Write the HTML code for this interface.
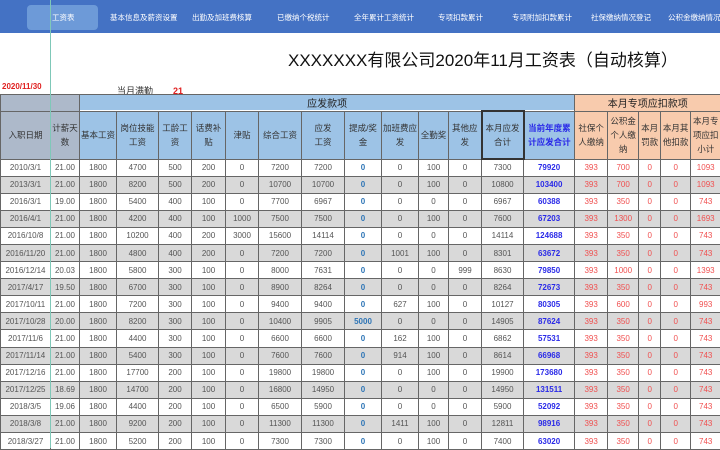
<!DOCTYPE html>
<html><head><meta charset="utf-8"><style>
*{margin:0;padding:0;box-sizing:border-box}
body{width:720px;height:448px;overflow:hidden;background:#fff;font-family:"Liberation Sans","Noto Sans CJK SC",sans-serif;position:relative}
.nav{position:absolute;left:0;top:0;width:720px;height:33px;background:#4472c4}
.nav span{position:absolute;top:12px;font-size:7.5px;color:#fff;white-space:nowrap}
.act{position:absolute;left:27px;top:5px;width:71px;height:25px;background:#6d9ad8;border-radius:4px}
.title{position:absolute;left:288px;top:46px;font-size:17px;color:#111;white-space:nowrap}
.date{position:absolute;left:2px;top:82px;font-size:8px;color:#e02020;font-weight:bold}
.mq{position:absolute;left:117px;top:84px;font-size:9px;color:#333}
.mq b{color:#e02020;margin-left:20px}
table{position:absolute;left:0;top:94px;border-collapse:collapse;table-layout:fixed;width:720px}
td{border:1px solid #666;font-size:8px;text-align:center;color:#555;height:17.1px;overflow:hidden;white-space:nowrap;padding:0}
tr.h1 td{height:14px;font-size:10px;color:#222}
tr.h2 td{height:48px;font-size:8.5px;color:#333;white-space:normal;line-height:14px}
.g{background:#adb9ca}.b{background:#9dc3e6}.o{background:#f8cbad}
tr.z td{background:#d9d9d9}
td.c{color:#2e75b6;font-weight:bold}
td.y{color:#2a2ae8;font-weight:bold}
td.r{color:#f05050}
.vl{position:absolute;left:50px;top:0;width:1px;height:448px;background:#7fc8b8}
</style></head><body>
<div class="nav"><div class="act"></div>
<span style="left:52px">工资表</span><span style="left:110px">基本信息及薪资设置</span><span style="left:192px">出勤及加班费核算</span><span style="left:277px">已缴纳个税统计</span><span style="left:354px">全年累计工资统计</span><span style="left:438px">专项扣款累计</span><span style="left:512px">专项附加扣款累计</span><span style="left:591px">社保缴纳情况登记</span><span style="left:668px">公积金缴纳情况登记</span></div>
<div class="title">XXXXXXX有限公司2020年11月工资表（自动核算）</div>
<div class="date">2020/11/30</div>
<div class="mq">当月满勤<b>21</b></div>
<table>
<colgroup><col style="width:50px"><col style="width:29px"><col style="width:37px"><col style="width:42px"><col style="width:33px"><col style="width:34px"><col style="width:33px"><col style="width:43px"><col style="width:43px"><col style="width:37px"><col style="width:37px"><col style="width:30px"><col style="width:33px"><col style="width:42px"><col style="width:51px"><col style="width:33px"><col style="width:31px"><col style="width:22px"><col style="width:30px"><col style="width:30px"></colgroup>
<tr class="h1"><td class="g" colspan="2"></td><td class="b" colspan="13">应发款项</td><td class="o" colspan="5">本月专项应扣款项</td></tr>
<tr class="h2"><td class="g">入职日期</td><td class="g">计薪天数</td><td class="b">基本工资</td><td class="b">岗位技能工资</td><td class="b">工龄工资</td><td class="b">话费补贴</td><td class="b">津贴</td><td class="b">综合工资</td><td class="b">应发<br>工资</td><td class="b">提成/奖金</td><td class="b">加班费应发</td><td class="b">全勤奖</td><td class="b">其他应发</td><td class="b" style="border:2px solid #333">本月应发合计</td><td class="b" style="color:#2a2ae8;font-weight:bold">当前年度累计应发合计</td><td class="o">社保个人缴纳</td><td class="o">公积金个人缴纳</td><td class="o">本月罚款</td><td class="o">本月其他扣款</td><td class="o">本月专项应扣小计</td></tr>
<tr><td>2010/3/1</td><td>21.00</td><td>1800</td><td>4700</td><td>500</td><td>200</td><td>0</td><td>7200</td><td>7200</td><td class="c">0</td><td>0</td><td>100</td><td>0</td><td>7300</td><td class="y">79920</td><td class="r">393</td><td class="r">700</td><td class="r">0</td><td class="r">0</td><td class="r">1093</td></tr>
<tr class="z"><td>2013/3/1</td><td>21.00</td><td>1800</td><td>8200</td><td>500</td><td>200</td><td>0</td><td>10700</td><td>10700</td><td class="c">0</td><td>0</td><td>100</td><td>0</td><td>10800</td><td class="y">103400</td><td class="r">393</td><td class="r">700</td><td class="r">0</td><td class="r">0</td><td class="r">1093</td></tr>
<tr><td>2016/3/1</td><td>19.00</td><td>1800</td><td>5400</td><td>400</td><td>100</td><td>0</td><td>7700</td><td>6967</td><td class="c">0</td><td>0</td><td>0</td><td>0</td><td>6967</td><td class="y">60388</td><td class="r">393</td><td class="r">350</td><td class="r">0</td><td class="r">0</td><td class="r">743</td></tr>
<tr class="z"><td>2016/4/1</td><td>21.00</td><td>1800</td><td>4200</td><td>400</td><td>100</td><td>1000</td><td>7500</td><td>7500</td><td class="c">0</td><td>0</td><td>100</td><td>0</td><td>7600</td><td class="y">67203</td><td class="r">393</td><td class="r">1300</td><td class="r">0</td><td class="r">0</td><td class="r">1693</td></tr>
<tr><td>2016/10/8</td><td>21.00</td><td>1800</td><td>10200</td><td>400</td><td>200</td><td>3000</td><td>15600</td><td>14114</td><td class="c">0</td><td>0</td><td>0</td><td>0</td><td>14114</td><td class="y">124688</td><td class="r">393</td><td class="r">350</td><td class="r">0</td><td class="r">0</td><td class="r">743</td></tr>
<tr class="z"><td>2016/11/20</td><td>21.00</td><td>1800</td><td>4800</td><td>400</td><td>200</td><td>0</td><td>7200</td><td>7200</td><td class="c">0</td><td>1001</td><td>100</td><td>0</td><td>8301</td><td class="y">63672</td><td class="r">393</td><td class="r">350</td><td class="r">0</td><td class="r">0</td><td class="r">743</td></tr>
<tr><td>2016/12/14</td><td>20.03</td><td>1800</td><td>5800</td><td>300</td><td>100</td><td>0</td><td>8000</td><td>7631</td><td class="c">0</td><td>0</td><td>0</td><td>999</td><td>8630</td><td class="y">79850</td><td class="r">393</td><td class="r">1000</td><td class="r">0</td><td class="r">0</td><td class="r">1393</td></tr>
<tr class="z"><td>2017/4/17</td><td>19.50</td><td>1800</td><td>6700</td><td>300</td><td>100</td><td>0</td><td>8900</td><td>8264</td><td class="c">0</td><td>0</td><td>0</td><td>0</td><td>8264</td><td class="y">72673</td><td class="r">393</td><td class="r">350</td><td class="r">0</td><td class="r">0</td><td class="r">743</td></tr>
<tr><td>2017/10/11</td><td>21.00</td><td>1800</td><td>7200</td><td>300</td><td>100</td><td>0</td><td>9400</td><td>9400</td><td class="c">0</td><td>627</td><td>100</td><td>0</td><td>10127</td><td class="y">80305</td><td class="r">393</td><td class="r">600</td><td class="r">0</td><td class="r">0</td><td class="r">993</td></tr>
<tr class="z"><td>2017/10/28</td><td>20.00</td><td>1800</td><td>8200</td><td>300</td><td>100</td><td>0</td><td>10400</td><td>9905</td><td class="c">5000</td><td>0</td><td>0</td><td>0</td><td>14905</td><td class="y">87624</td><td class="r">393</td><td class="r">350</td><td class="r">0</td><td class="r">0</td><td class="r">743</td></tr>
<tr><td>2017/11/6</td><td>21.00</td><td>1800</td><td>4400</td><td>300</td><td>100</td><td>0</td><td>6600</td><td>6600</td><td class="c">0</td><td>162</td><td>100</td><td>0</td><td>6862</td><td class="y">57531</td><td class="r">393</td><td class="r">350</td><td class="r">0</td><td class="r">0</td><td class="r">743</td></tr>
<tr class="z"><td>2017/11/14</td><td>21.00</td><td>1800</td><td>5400</td><td>300</td><td>100</td><td>0</td><td>7600</td><td>7600</td><td class="c">0</td><td>914</td><td>100</td><td>0</td><td>8614</td><td class="y">66968</td><td class="r">393</td><td class="r">350</td><td class="r">0</td><td class="r">0</td><td class="r">743</td></tr>
<tr><td>2017/12/16</td><td>21.00</td><td>1800</td><td>17700</td><td>200</td><td>100</td><td>0</td><td>19800</td><td>19800</td><td class="c">0</td><td>0</td><td>100</td><td>0</td><td>19900</td><td class="y">173680</td><td class="r">393</td><td class="r">350</td><td class="r">0</td><td class="r">0</td><td class="r">743</td></tr>
<tr class="z"><td>2017/12/25</td><td>18.69</td><td>1800</td><td>14700</td><td>200</td><td>100</td><td>0</td><td>16800</td><td>14950</td><td class="c">0</td><td>0</td><td>0</td><td>0</td><td>14950</td><td class="y">131511</td><td class="r">393</td><td class="r">350</td><td class="r">0</td><td class="r">0</td><td class="r">743</td></tr>
<tr><td>2018/3/5</td><td>19.06</td><td>1800</td><td>4400</td><td>200</td><td>100</td><td>0</td><td>6500</td><td>5900</td><td class="c">0</td><td>0</td><td>0</td><td>0</td><td>5900</td><td class="y">52092</td><td class="r">393</td><td class="r">350</td><td class="r">0</td><td class="r">0</td><td class="r">743</td></tr>
<tr class="z"><td>2018/3/8</td><td>21.00</td><td>1800</td><td>9200</td><td>200</td><td>100</td><td>0</td><td>11300</td><td>11300</td><td class="c">0</td><td>1411</td><td>100</td><td>0</td><td>12811</td><td class="y">98916</td><td class="r">393</td><td class="r">350</td><td class="r">0</td><td class="r">0</td><td class="r">743</td></tr>
<tr><td>2018/3/27</td><td>21.00</td><td>1800</td><td>5200</td><td>200</td><td>100</td><td>0</td><td>7300</td><td>7300</td><td class="c">0</td><td>0</td><td>100</td><td>0</td><td>7400</td><td class="y">63020</td><td class="r">393</td><td class="r">350</td><td class="r">0</td><td class="r">0</td><td class="r">743</td></tr>
</table>
<div class="vl"></div>
</body></html>
